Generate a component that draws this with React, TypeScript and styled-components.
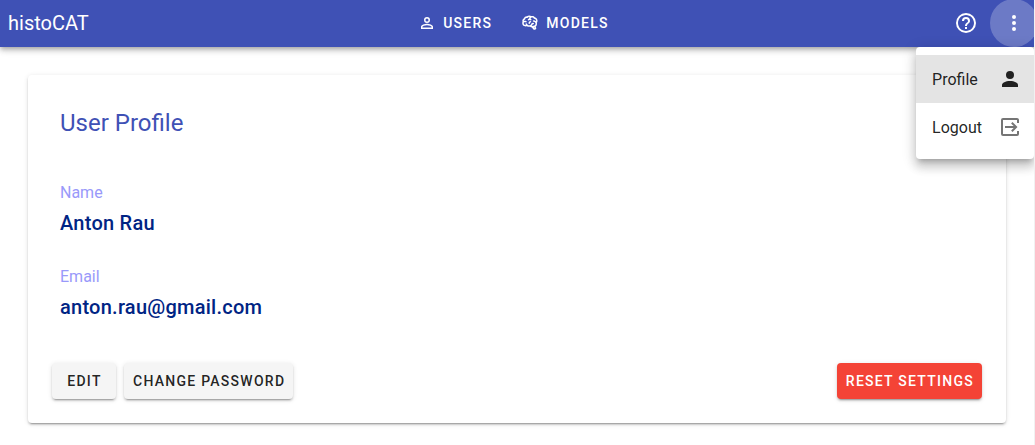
import React from "react";
import styled, { createGlobalStyle, css } from "styled-components";

const GlobalStyle = createGlobalStyle`
  *, *::before, *::after { box-sizing: border-box; }
  body {
    margin: 0;
    background: #fff;
    color: rgba(0, 0, 0, 0.87);
    font-family: Roboto, sans-serif;
    font-size: 16px;
    line-height: 24px;
  }
`;

const elevation2 = css`
  box-shadow: 0 3px 1px -2px rgba(0, 0, 0, 0.2), 0 2px 2px 0 rgba(0, 0, 0, 0.14),
    0 1px 5px 0 rgba(0, 0, 0, 0.12);
`;

const Page = styled.div`
  min-height: 100vh;
  border-right: 1px solid #f1f1f1;
  overflow: hidden;
`;

const AppBar = styled.header`
  position: relative;
  display: grid;
  grid-template-columns: 1fr auto 1fr;
  align-items: center;
  height: 47px;
  padding: 0 15px 1px 8px;
  background: #3f51b5;
  color: #fff;
  box-shadow: 0 2px 4px -1px rgba(0, 0, 0, 0.2), 0 4px 5px 0 rgba(0, 0, 0, 0.14),
    0 1px 10px 0 rgba(0, 0, 0, 0.12);
`;

const Brand = styled.a`
  justify-self: start;
  color: inherit;
  font-size: 20px;
  text-decoration: none;
`;

const Nav = styled.nav`
  display: flex;
  gap: 29px;
`;

const NavLink = styled.a`
  display: flex;
  align-items: center;
  gap: 7px;
  color: inherit;
  font-size: 14px;
  font-weight: 500;
  letter-spacing: 0.09em;
  text-decoration: none;
  text-transform: uppercase;
`;

const Actions = styled.div`
  position: relative;
  display: flex;
  justify-self: end;
  height: 48px;
  margin: -1px -19px -1px 0;
`;

const IconButton = styled.button<{ $active?: boolean }>`
  display: grid;
  place-items: center;
  width: 48px;
  height: 48px;
  padding: 0;
  border: 0;
  border-radius: 50%;
  background: ${(p) => (p.$active ? "rgba(255, 255, 255, 0.24)" : "transparent")};
  color: inherit;
  cursor: pointer;
`;

const Menu = styled.div`
  position: absolute;
  z-index: 2;
  top: 48px;
  right: 4px;
  padding: 8px 0;
  border-radius: 4px;
  background: #fff;
  color: rgba(0, 0, 0, 0.87);
  box-shadow: 0 5px 5px -3px rgba(0, 0, 0, 0.2), 0 8px 10px 1px rgba(0, 0, 0, 0.14),
    0 3px 14px 2px rgba(0, 0, 0, 0.12);
`;

const MenuItem = styled.a<{ $active?: boolean }>`
  display: flex;
  align-items: center;
  justify-content: space-between;
  gap: 16px;
  height: 48px;
  padding: 0 12px 0 16px;
  background: ${(p) => (p.$active ? "#e4e4e4" : "transparent")};
  color: inherit;
  text-decoration: none;

  svg {
    color: ${(p) => (p.$active ? "#212121" : "#757575")};
  }
`;

const MenuLabel = styled.span`
  padding-top: 2px;
`;

const Main = styled.main`
  padding: 28px 28px 22px;
`;

const Card = styled.section`
  padding: 16px;
  border-radius: 4px;
  background: #fff;
  ${elevation2}
`;

const CardTitle = styled.h1`
  margin: 0;
  padding: 16px;
  color: #3f51b5;
  font-size: 24px;
  font-weight: 400;
  line-height: 32px;
`;

const Details = styled.dl`
  display: grid;
  gap: 26px;
  margin: 0;
  padding: 24px 16px 34px;
`;

const Label = styled.dt`
  padding: 2px 0 4px;
  color: #9999fa;
`;

const Value = styled.dd`
  margin: 0;
  color: #002484;
  font-size: 20px;
  font-weight: 500;
  letter-spacing: 0.0125em;
  line-height: 28px;
`;

const CardActions = styled.div`
  display: flex;
  gap: 8px;
  padding: 8px;
`;

const Button = styled.button<{ $danger?: boolean }>`
  min-width: 64px;
  height: 36px;
  padding: 0 8px 0 9px;
  border: 0;
  border-radius: 4px;
  background: ${(p) => (p.$danger ? "#f44336" : "#f5f5f5")};
  color: ${(p) => (p.$danger ? "#fff" : "rgba(0, 0, 0, 0.87)")};
  font: 500 14px Roboto, sans-serif;
  letter-spacing: 0.09em;
  text-transform: uppercase;
  cursor: pointer;
  ${elevation2}
`;

const Spacer = styled.div`
  flex: 1;
`;

const icons = {
  accountOutline:
    "M12,4A4,4 0 0,1 16,8A4,4 0 0,1 12,12A4,4 0 0,1 8,8A4,4 0 0,1 12,4M12,6A2,2 0 0,0 10,8A2,2 0 0,0 12,10A2,2 0 0,0 14,8A2,2 0 0,0 12,6M12,13C14.67,13 20,14.33 20,17V20H4V17C4,14.33 9.33,13 12,13M12,14.9C9.03,14.9 5.9,16.36 5.9,17V18.1H18.1V17C18.1,16.36 14.97,14.9 12,14.9Z",
  account:
    "M12,4A4,4 0 0,1 16,8A4,4 0 0,1 12,12A4,4 0 0,1 8,8A4,4 0 0,1 12,4M12,14C16.42,14 20,15.79 20,18V20H4V18C4,15.79 7.58,14 12,14Z",
  brain:
    "M21.33,12.91C21.42,14.46 20.71,15.95 19.44,16.86L20.21,18.35C20.44,18.8 20.47,19.33 20.27,19.8C20.08,20.27 19.69,20.64 19.21,20.8L18.42,21.05C18.25,21.11 18.06,21.14 17.88,21.14C17.37,21.14 16.89,20.91 16.56,20.5L14.44,18C13.55,17.85 12.71,17.47 12,16.9C11.5,17.05 11,17.13 10.5,17.13C9.62,17.13 8.74,16.86 8,16.34C7.47,16.5 6.93,16.57 6.38,16.56C5.59,16.57 4.81,16.41 4.08,16.11C2.65,15.47 1.7,14.07 1.65,12.5C1.57,11.78 1.69,11.05 2,10.39C1.71,9.64 1.68,8.82 1.93,8.06C2.3,7.11 3,6.32 3.87,5.82C4.45,4.13 6.08,3 7.87,3.12C9.47,1.62 11.92,1.46 13.7,2.75C14.12,2.64 14.56,2.58 15,2.58C16.36,2.55 17.65,3.15 18.5,4.22C20.54,4.75 22,6.57 22.08,8.69C22.13,9.8 21.83,10.89 21.22,11.82C21.29,12.18 21.33,12.54 21.33,12.91M16.33,11.5C16.9,11.57 17.35,12 17.35,12.57A1,1 0 0,1 16.35,13.57H15.72C15.4,14.47 14.84,15.26 14.1,15.86C14.35,15.95 14.61,16 14.87,16.07C20,16 19.4,12.87 19.4,12.82C19.34,11.39 18.14,10.27 16.71,10.33A1,1 0 0,1 15.71,9.33A1,1 0 0,1 16.71,8.33C17.94,8.36 19.12,8.82 20.04,9.63C20.09,9.34 20.12,9.04 20.12,8.74C20.06,7.5 19.5,6.42 17.25,6.21C16,3.25 12.85,4.89 12.85,5.81C12.82,6.04 13.06,6.53 13.1,6.56A1,1 0 0,1 14.1,7.56C14.1,8.11 13.65,8.56 13.1,8.56C12.57,8.54 12.07,8.34 11.67,8C11.19,8.31 10.64,8.5 10.07,8.56C9.5,8.61 9.03,8.21 9,7.66C8.92,7.1 9.33,6.61 9.88,6.56C10.04,6.54 10.82,6.42 10.82,5.79C10.82,5.13 11.07,4.5 11.5,4C10.58,3.75 9.59,4.08 8.59,5.29C6.75,5 6,5.25 5.45,7.2C4.5,7.67 4,8 3.78,9C4.86,8.78 5.97,8.87 7,9.25C7.5,9.44 7.78,10 7.59,10.54C7.4,11.06 6.82,11.32 6.3,11.13C5.57,10.81 4.75,10.79 4,11.07C3.68,11.34 3.68,11.9 3.68,12.34C3.68,13.08 4.05,13.77 4.68,14.17C5.21,14.44 5.8,14.58 6.39,14.57C6.24,14.31 6.11,14.04 6,13.76C5.81,13.22 6.1,12.63 6.64,12.44C7.18,12.25 7.77,12.54 7.96,13.08C8.36,14.22 9.38,15 10.58,15.13C11.95,15.06 13.17,14.25 13.77,13C14,11.62 15.11,11.5 16.33,11.5M18.33,18.97L17.71,17.67L17,17.83L18,19.08L18.33,18.97M13.68,10.36C13.7,9.83 13.3,9.38 12.77,9.33C12.06,9.29 11.37,9.53 10.84,10C10.27,10.58 9.97,11.38 10,12.19A1,1 0 0,0 11,13.19C11.57,13.19 12,12.74 12,12.19C12,11.92 12.07,11.65 12.23,11.43C12.35,11.33 12.5,11.28 12.66,11.28C13.21,11.31 13.68,10.9 13.68,10.36Z",
  help:
    "M11,18H13V16H11V18M12,2A10,10 0 0,0 2,12A10,10 0 0,0 12,22A10,10 0 0,0 22,12A10,10 0 0,0 12,2M12,20C7.59,20 4,16.41 4,12C4,7.59 7.59,4 12,4C16.41,4 20,7.59 20,12C20,16.41 16.41,20 12,20M12,6A4,4 0 0,0 8,10H10A2,2 0 0,1 12,8A2,2 0 0,1 14,10C14,12 11,11.75 11,15H13C13,12.75 16,12.5 16,10A4,4 0 0,0 12,6Z",
  dots:
    "M12,16A2,2 0 0,1 14,18A2,2 0 0,1 12,20A2,2 0 0,1 10,18A2,2 0 0,1 12,16M12,10A2,2 0 0,1 14,12A2,2 0 0,1 12,14A2,2 0 0,1 10,12A2,2 0 0,1 12,10M12,4A2,2 0 0,1 14,6A2,2 0 0,1 12,8A2,2 0 0,1 10,6A2,2 0 0,1 12,4Z",
  logout:
    "M21,8V5C21,3.89 20.1,3 19,3H5A2,2 0 0,0 3,5V19A2,2 0 0,0 5,21H19A2,2 0 0,0 21,19V16H19V19H5V5H19V8H21M13.1,15.6L14.5,17L19.5,12L14.5,7L13.1,8.4L15.7,11H7V13H15.7L13.1,15.6Z",
};

function Icon({ name, size = 24 }: { name: keyof typeof icons; size?: number }) {
  return (
    <svg width={size} height={size} viewBox="0 0 24 24" fill="currentColor" aria-hidden="true">
      <path d={icons[name]} />
    </svg>
  );
}

export default function App() {
  return (
    <Page>
      <GlobalStyle />
      <AppBar>
        <Brand href="#">histoCAT</Brand>
        <Nav>
          <NavLink href="#users">
            <Icon name="accountOutline" size={18} />
            Users
          </NavLink>
          <NavLink href="#models">
            <Icon name="brain" size={18} />
            Models
          </NavLink>
        </Nav>
        <Actions>
          <IconButton aria-label="Help">
            <Icon name="help" />
          </IconButton>
          <IconButton $active aria-label="Account menu" aria-expanded="true">
            <Icon name="dots" />
          </IconButton>
          <Menu>
            <MenuItem href="#profile" $active>
              <MenuLabel>Profile</MenuLabel>
              <Icon name="account" />
            </MenuItem>
            <MenuItem href="#logout">
              <MenuLabel>Logout</MenuLabel>
              <Icon name="logout" />
            </MenuItem>
          </Menu>
        </Actions>
      </AppBar>
      <Main>
        <Card>
          <CardTitle>User Profile</CardTitle>
          <Details>
            <div>
              <Label>Name</Label>
              <Value>Anton Rau</Value>
            </div>
            <div>
              <Label>Email</Label>
              <Value>anton.rau@gmail.com</Value>
            </div>
          </Details>
          <CardActions>
            <Button>Edit</Button>
            <Button>Change password</Button>
            <Spacer />
            <Button $danger>Reset settings</Button>
          </CardActions>
        </Card>
      </Main>
    </Page>
  );
}
